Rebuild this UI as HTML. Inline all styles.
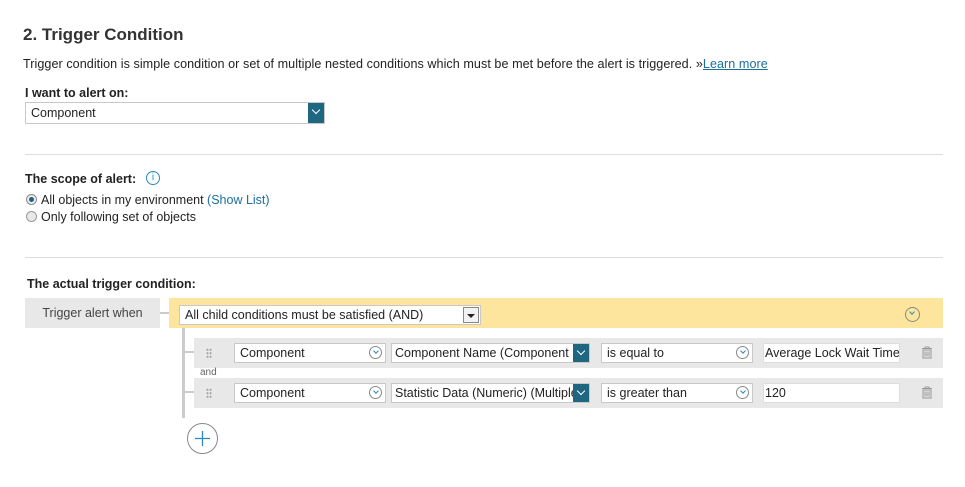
<!DOCTYPE html>
<html><head><style>
*{margin:0;padding:0;box-sizing:border-box}
body{width:965px;height:487px;background:#fff;font-family:"Liberation Sans",sans-serif;color:#222;position:relative;overflow:hidden;font-size:13px}
.a{position:absolute;white-space:nowrap}
.sel{position:absolute;background:#fff;border:1px solid #c8c8c8;font-size:12.5px;padding-left:5px;line-height:19px;white-space:nowrap;overflow:hidden}
.blu{position:absolute;background:#1f6680;top:-1px;right:-1px;bottom:-1px;width:17px}
.blu:after{content:"";position:absolute;left:5px;top:5px;width:5px;height:5px;border-right:1px solid #fff;border-bottom:1px solid #fff;transform:rotate(45deg)}
.circ{position:absolute;width:13px;height:13px;border:1px solid #888;border-radius:50%}
.circ:after{content:"";position:absolute;left:3.5px;top:2px;width:3px;height:3px;border-right:1px solid #2a8ac0;border-bottom:1px solid #2a8ac0;transform:rotate(45deg)}
.row{position:absolute;left:194px;width:749px;height:30px;background:#e8e8e8}
.hr{position:absolute;left:25px;width:918px;height:1px;background:#ddd}
.dots{position:absolute;width:6px;height:10px;background-image:radial-gradient(circle,#aaa 1px,transparent 1.2px);background-size:3px 3.5px}
</style></head><body>
<div class="a" style="left:23px;top:25px;font-size:17px;font-weight:bold;color:#333">2. Trigger Condition</div>
<div class="a" style="left:23px;top:57px;font-size:12.6px;letter-spacing:0.05px">Trigger condition is simple condition or set of multiple nested conditions which must be met before the alert is triggered. »<span style="color:#1a6fa0;text-decoration:underline">Learn more</span></div>
<div class="a" style="left:25px;top:86px;font-weight:bold;font-size:12.5px">I want to alert on:</div>
<div class="sel" style="left:25px;top:102px;width:300px;height:22px;line-height:20px">Component<div class="blu"></div></div>
<div class="hr" style="top:154px"></div>
<div class="a" style="left:25px;top:172px;font-weight:bold;font-size:12.5px">The scope of alert:</div>
<div class="a" style="left:146px;top:171px;width:14px;height:14px;border:1px solid #2a8ac0;border-radius:50%;color:#2a8ac0;font-size:10px;text-align:center;line-height:12px">i</div>
<div class="a" style="left:26px;top:194px;width:11px;height:11px;border:1px solid #888;border-radius:50%;background:#eee"><div style="position:absolute;left:2px;top:2px;width:5px;height:5px;border-radius:50%;background:#1f5f8a"></div></div>
<div class="a" style="left:41px;top:193px;font-size:12.5px">All objects in my environment <span style="color:#1a6fa0">(Show List)</span></div>
<div class="a" style="left:26px;top:211px;width:11px;height:11px;border:1px solid #999;border-radius:50%;background:#e8e8e8"></div>
<div class="a" style="left:41px;top:210px;font-size:12.5px">Only following set of objects</div>
<div class="hr" style="top:257px"></div>
<div class="a" style="left:27px;top:277px;font-weight:bold;font-size:12.5px">The actual trigger condition:</div>
<div class="a" style="left:25px;top:298px;width:135px;height:30px;background:#e8e8e8;text-align:center;line-height:30px;font-size:12.5px;color:#444">Trigger alert when</div>
<div class="a" style="left:160px;top:312px;width:10px;height:2px;background:#ccc"></div>
<div class="a" style="left:169px;top:298px;width:774px;height:30px;background:#fde59d"></div>
<div class="sel" style="left:179px;top:305px;width:302px;height:20px">All child conditions must be satisfied (AND)<div style="position:absolute;right:1px;top:1px;width:16px;height:16px;border:1px solid #888;background:#f2f2f2"><div style="position:absolute;left:3px;top:6px;border-left:4px solid transparent;border-right:4px solid transparent;border-top:4px solid #222"></div></div></div>
<div class="circ" style="left:905px;top:307px;width:15px;height:15px"></div>
<div class="a" style="left:182px;top:328px;width:3px;height:90px;background:#ccc"></div>
<div class="a" style="left:185px;top:351px;width:9px;height:2px;background:#ccc"></div>
<div class="a" style="left:185px;top:391px;width:9px;height:2px;background:#ccc"></div>
<div class="row" style="top:338px"></div>
<div class="row" style="top:378px"></div>
<div class="a" style="left:200px;top:367px;font-size:10px;color:#666">and</div>
<div class="dots" style="left:206px;top:348px"></div>
<div class="dots" style="left:206px;top:388px"></div>
<div class="sel" style="left:234px;top:343px;width:152px;height:20px">Component<div class="circ" style="right:3px;top:2px"></div></div>
<div class="sel" style="left:391px;top:343px;width:199px;height:20px;padding-left:3px">Component Name (Component<div class="blu"></div></div>
<div class="sel" style="left:601px;top:343px;width:152px;height:20px">is equal to<div class="circ" style="right:3px;top:2px"></div></div>
<div class="sel" style="left:763px;top:343px;width:137px;height:20px;padding-left:1px;border-color:#ddd">Average Lock Wait Time</div>
<div class="sel" style="left:234px;top:383px;width:152px;height:20px">Component<div class="circ" style="right:3px;top:2px"></div></div>
<div class="sel" style="left:391px;top:383px;width:199px;height:20px;padding-left:3px">Statistic Data (Numeric) (Multiple<div class="blu"></div></div>
<div class="sel" style="left:601px;top:383px;width:152px;height:20px">is greater than<div class="circ" style="right:3px;top:2px"></div></div>
<div class="sel" style="left:763px;top:383px;width:137px;height:20px;padding-left:1px;border-color:#ddd">120</div>
<svg class="a" style="left:921px;top:346px" width="12" height="13" viewBox="0 0 12 13"><path d="M1 2.5h10M4 2.5V1h4v1.5M2 4h8v8H2z M4 5.5v5M6 5.5v5M8 5.5v5" stroke="#999" fill="none"/></svg>
<svg class="a" style="left:921px;top:386px" width="12" height="13" viewBox="0 0 12 13"><path d="M1 2.5h10M4 2.5V1h4v1.5M2 4h8v8H2z M4 5.5v5M6 5.5v5M8 5.5v5" stroke="#999" fill="none"/></svg>
<svg class="a" style="left:186px;top:422px" width="33" height="33"><circle cx="16.5" cy="16.5" r="15" stroke="#888" fill="#fff"/><path d="M16.5 9v15M9 16.5h15" stroke="#2a8ac0" stroke-width="1.3"/></svg>
</body></html>
